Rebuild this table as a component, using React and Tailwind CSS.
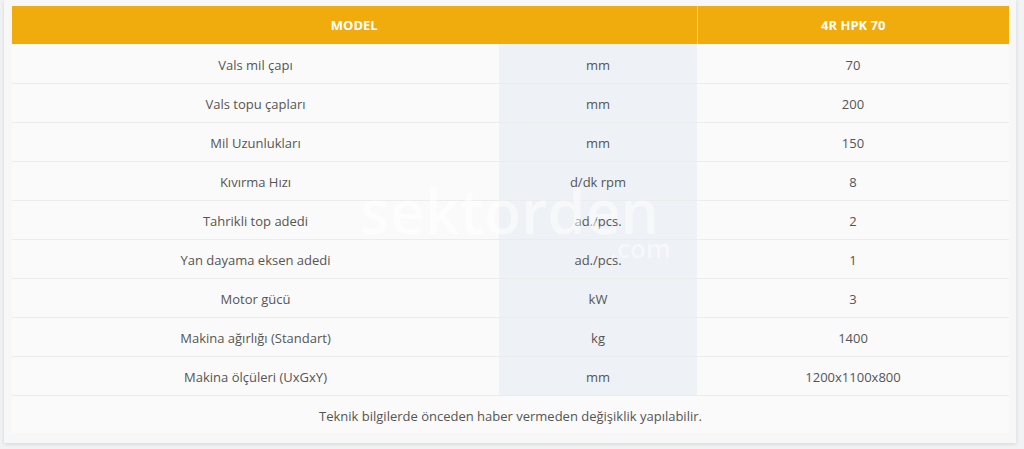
import React from 'react';

const rows = [
  ['Vals mil çapı', 'mm', '70'],
  ['Vals topu çapları', 'mm', '200'],
  ['Mil Uzunlukları', 'mm', '150'],
  ['Kıvırma Hızı', 'd/dk rpm', '8'],
  ['Tahrikli top adedi', 'ad./pcs.', '2'],
  ['Yan dayama eksen adedi', 'ad./pcs.', '1'],
  ['Motor gücü', 'kW', '3'],
  ['Makina ağırlığı (Standart)', 'kg', '1400'],
  ['Makina ölçüleri (UxGxY)', 'mm', '1200x1100x800'],
];

export default function App() {
  return (
    <div
      className="h-[449px] w-[1024px] bg-[#f1f2f3] pl-1 pr-2 pb-[6px]"
      style={{ fontFamily: '"Open Sans", "Noto Sans", sans-serif' }}
    >
      <div className="relative h-full bg-[#f7f7f7] px-2 pt-[6px] shadow-[0_1px_4px_rgba(0,0,0,0.12)]">
        <table className="w-[997px] border-collapse text-[13px] text-[#555]">
          <thead>
            <tr className="h-[38px] bg-[#f0ab0c] text-white">
              <th colSpan={2} className="w-[685px] border-r border-[#f7d27e] pt-[2px] font-bold">
                MODEL
              </th>
              <th className="pt-[2px] font-bold">4R HPK 70</th>
            </tr>
          </thead>
          <tbody>
            {rows.map(([label, unit, value]) => (
              <tr key={label} className="h-[39px] border-b border-[#ececec]">
                <td className="w-[487px] bg-[#fafafa] pt-1 text-center">{label}</td>
                <td className="w-[198px] bg-[#eef1f5] pt-1 text-center">{unit}</td>
                <td className="bg-[#fafafa] pt-1 text-center">{value}</td>
              </tr>
            ))}
            <tr className="h-[38px]">
              <td colSpan={3} className="bg-[#fafafa] pt-1 text-center">
                Teknik bilgilerde önceden haber vermeden değişiklik yapılabilir.
              </td>
            </tr>
          </tbody>
        </table>

        {/* faint watermark over the table */}
        <div className="pointer-events-none absolute left-[356px] top-[180px] select-none font-semibold text-white/50">
          <div className="text-[61px] leading-none">sektorden</div>
          <div className="-mt-[6px] pl-[250px] text-[26px] leading-none">.com</div>
        </div>
      </div>
    </div>
  );
}
